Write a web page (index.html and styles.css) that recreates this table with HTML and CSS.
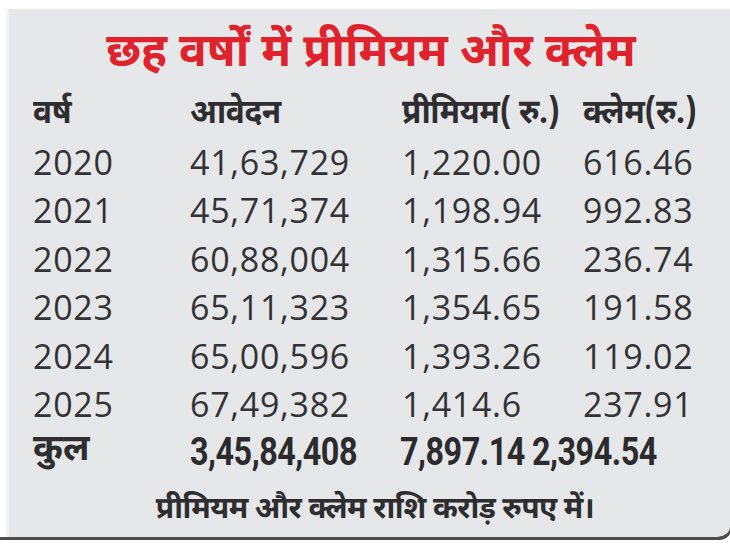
FILE: index.html
```html
<!DOCTYPE html>
<html lang="hi">
<head>
<meta charset="utf-8">
<title>छह वर्षों में प्रीमियम और क्लेम</title>
<link rel="stylesheet" href="styles.css">
</head>
<body>
<div class="frame">
  <h1 class="title">छह वर्षों में प्रीमियम और क्लेम</h1>
  <div class="row head">
    <span>वर्ष</span>
    <span>आवेदन</span>
    <span>प्रीमियम( रु.)</span>
    <span>क्लेम(रु.)</span>
  </div>
  <div class="row data"><span>2020</span><span>41,63,729</span><span>1,220.00</span><span>616.46</span></div>
  <div class="row data"><span>2021</span><span>45,71,374</span><span>1,198.94</span><span>992.83</span></div>
  <div class="row data"><span>2022</span><span>60,88,004</span><span>1,315.66</span><span>236.74</span></div>
  <div class="row data"><span>2023</span><span>65,11,323</span><span>1,354.65</span><span>191.58</span></div>
  <div class="row data"><span>2024</span><span>65,00,596</span><span>1,393.26</span><span>119.02</span></div>
  <div class="row data"><span>2025</span><span>67,49,382</span><span>1,414.6</span><span>237.91</span></div>
  <div class="row total"><span class="kul">कुल</span><span class="num">3,45,84,408</span><span class="num">7,897.14</span><span class="num">2,394.54</span></div>
  <p class="note">प्रीमियम और क्लेम राशि करोड़ रुपए में।</p>
</div>
</body>
</html>
```
FILE: styles.css
```css
html, body {
  margin: 0;
  padding: 0;
  background: #ffffff;
  overflow: hidden;
}
body {
  width: 730px;
  height: 548px;
}
.frame {
  position: relative;
  box-sizing: border-box;
  margin-top: 9px;
  width: 730px;
  height: 531px;
  background: linear-gradient(to right, #ffffff 0, #ffffff 5px, #e6e7e9 10px);
  border-bottom: 3px solid #4d4d4d;
  border-bottom-right-radius: 13px;
  display: flex;
  flex-direction: column;
  font-family: "Noto Sans Devanagari", "Noto Sans", "Lohit Devanagari", sans-serif;
  color: #2e2e30;
}
.frame::after {
  content: "";
  position: absolute;
  right: -2px;
  bottom: -3px;
  width: 14px;
  height: 10px;
  border-right: 2px solid #4d4d4d;
  border-bottom: 3px solid #4d4d4d;
  border-bottom-right-radius: 13px;
}
.title {
  margin: 16px 0 0 0;
  height: 60px;
  line-height: 60px;
  text-align: center;
  font-size: 46px;
  font-weight: 700;
  color: #e0222c;
  padding-left: 12px;
}
.row {
  display: grid;
  grid-template-columns: 157px 212px 181px auto;
  padding-left: 33px;
  align-items: center;
}
.head {
  margin-top: 8px;
  height: 45px;
  font-size: 34px;
  font-weight: 700;
  letter-spacing: -0.5px;
}
.head span {
  display: inline-block;
  transform: scaleX(0.93);
  transform-origin: left center;
  white-space: nowrap;
}
.data {
  height: 48.4px;
  font-family: "Open Sans", "Noto Sans", sans-serif;
  font-size: 34px;
  letter-spacing: 0.7px;
  color: #333335;
}
.total {
  grid-template-columns: 157px 210px 132px auto;
  height: 46px;
  font-weight: 700;
}
.total span {
  display: inline-block;
  white-space: nowrap;
}
.total .num {
  font-family: "Roboto", "Liberation Sans", sans-serif;
  font-size: 39px;
  letter-spacing: -0.6px;
  transform: scaleX(0.83);
  transform-origin: left center;
  color: #2b2b2d;
}
.kul {
  font-size: 36px;
}
.note {
  margin: 11px 0 0 0;
  height: 52px;
  line-height: 52px;
  text-align: center;
  font-size: 30px;
  font-weight: 700;
  letter-spacing: -0.6px;
  padding-left: 20px;
}
```
